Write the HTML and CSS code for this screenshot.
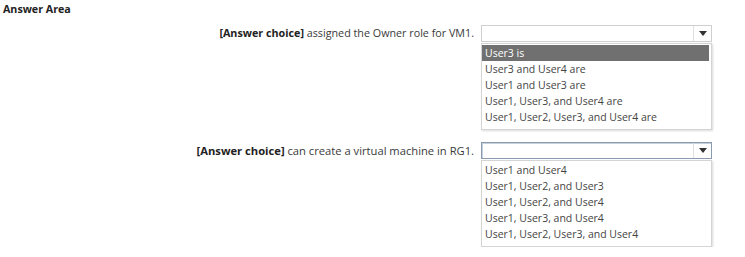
FILE: index.html
```html
<!DOCTYPE html>
<html>
<head>
<meta charset="utf-8">
<link rel="stylesheet" href="styles.css">
</head>
<body>
<div class="page">
  <h1 class="title">Answer Area</h1>
  <div class="question">
    <div class="label"><b>[Answer choice]</b> assigned the Owner role for VM1.</div>
    <div class="dropdown">
      <div class="select"><span class="value"></span><span class="btn"><span class="arrow"></span></span></div>
      <ul class="list">
        <li class="selected">User3 is</li>
        <li>User3 and User4 are</li>
        <li>User1 and User3 are</li>
        <li>User1, User3, and User4 are</li>
        <li>User1, User2, User3, and User4 are</li>
      </ul>
    </div>
  </div>
  <div class="question q2">
    <div class="label large"><b>[Answer choice]</b> can create a virtual machine in RG1.</div>
    <div class="dropdown">
      <div class="select focused"><span class="value"></span><span class="btn"><span class="arrow"></span></span></div>
      <ul class="list">
        <li>User1 and User4</li>
        <li>User1, User2, and User3</li>
        <li>User1, User2, and User4</li>
        <li>User1, User3, and User4</li>
        <li>User1, User2, User3, and User4</li>
      </ul>
    </div>
  </div>
</div>
</body>
</html>
```
FILE: styles.css
```css
html, body {
  margin: 0;
  padding: 0;
  background: #ffffff;
}
body {
  font-family: "Open Sans", "Noto Sans", sans-serif;
  color: #333333;
}
.page {
  padding: 2px 0 0 3px;
}
.title {
  margin: 0 0 8px 0;
  font-size: 10.7px;
  font-weight: 700;
  line-height: 15px;
  color: #222222;
}
.question {
  display: grid;
  grid-template-columns: 471px 231px;
  column-gap: 7px;
  align-items: start;
}
.q2 {
  margin-top: 12px;
}
.label {
  text-align: right;
  font-size: 10.75px;
  line-height: 17px;
  color: #3a3a3a;
  white-space: nowrap;
}
.label.large {
  font-size: 11.2px;
}
.label b {
  font-weight: 700;
  color: #222222;
}
.dropdown {
  display: flex;
  flex-direction: column;
}
.select {
  display: flex;
  height: 15px;
  border: 1px solid #cfcfcf;
  background: #ffffff;
}
.select.focused {
  border-color: #8a9bb0;
  box-shadow: inset 1px 1px 0 #c5d0dc;
}
.value {
  flex: 1;
}
.btn {
  width: 17px;
  border-left: 1px solid #e0e0e0;
  display: flex;
  align-items: center;
  justify-content: center;
}
.arrow {
  width: 0;
  height: 0;
  border-left: 4px solid transparent;
  border-right: 4px solid transparent;
  border-top: 5px solid #333333;
}
.list {
  list-style: none;
  margin: 1px 0 0 0;
  padding: 1px 0 4px 0;
  border: 1px solid #d4d4d4;
  box-shadow: 1px 1px 2px rgba(0, 0, 0, 0.15);
  background: #ffffff;
}
.list li {
  height: 16px;
  line-height: 16px;
  padding: 0 0 0 3px;
  font-size: 10.5px;
  color: #444444;
  white-space: nowrap;
}
.list li.selected {
  background: #707070;
  color: #ffffff;
  margin-right: 2px;
}
```
